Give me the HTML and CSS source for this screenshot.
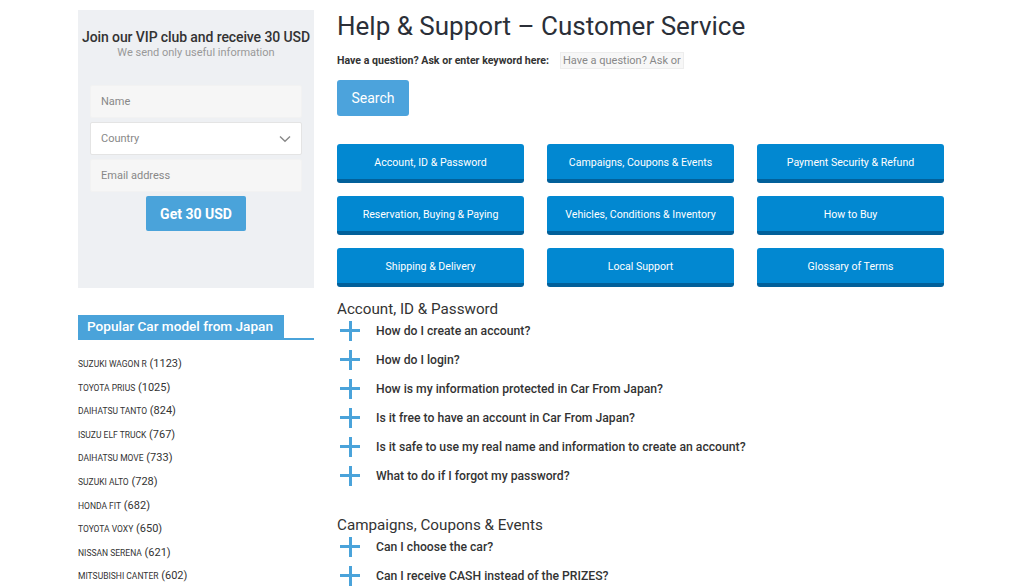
FILE: index.html
```html
<!DOCTYPE html>
<html lang="en">
<head>
    <meta charset="UTF-8">
    <meta name="viewport" content="width=device-width, initial-scale=1.0">
    <title>Help &amp; Support – Customer Service</title>
    <link rel="stylesheet" href="styles.css">
</head>
<body>
    <div class="page">
        <aside class="sidebar">
            <div class="vip-box">
                <h3>Join our VIP club and receive 30 USD</h3>
                <p class="vip-sub">We send only useful information</p>
                <form class="vip-form">
                    <input type="text" class="field field-grey" placeholder="Name">
                    <div class="field field-select">
                        <span>Country</span>
                        <svg width="12" height="8" viewBox="0 0 12 8"><path d="M1 1.5 6 6.2 11 1.5" fill="none" stroke="#888" stroke-width="1.4"/></svg>
                    </div>
                    <input type="text" class="field field-grey" placeholder="Email address">
                    <button type="button" class="btn-get">Get 30 USD</button>
                </form>
            </div>

            <div class="popular">
                <div class="popular-title"><span>Popular Car model from Japan</span></div>
                <ul class="model-list">
                    <li><span class="model">SUZUKI WAGON R</span> (1123)</li>
                    <li><span class="model">TOYOTA PRIUS</span> (1025)</li>
                    <li><span class="model">DAIHATSU TANTO</span> (824)</li>
                    <li><span class="model">ISUZU ELF TRUCK</span> (767)</li>
                    <li><span class="model">DAIHATSU MOVE</span> (733)</li>
                    <li><span class="model">SUZUKI ALTO</span> (728)</li>
                    <li><span class="model">HONDA FIT</span> (682)</li>
                    <li><span class="model">TOYOTA VOXY</span> (650)</li>
                    <li><span class="model">NISSAN SERENA</span> (621)</li>
                    <li><span class="model">MITSUBISHI CANTER</span> (602)</li>
                </ul>
            </div>
        </aside>

        <main class="content">
            <h1>Help &amp; Support – Customer Service</h1>
            <div class="ask-row">
                <label>Have a question? Ask or enter keyword here:</label>
                <input type="text" class="ask-input" placeholder="Have a question? Ask or enter keyword">
            </div>
            <button type="button" class="btn-search">Search</button>

            <div class="cat-grid">
                <a class="cat">Account, ID &amp; Password</a>
                <a class="cat">Campaigns, Coupons &amp; Events</a>
                <a class="cat">Payment Security &amp; Refund</a>
                <a class="cat">Reservation, Buying &amp; Paying</a>
                <a class="cat">Vehicles, Conditions &amp; Inventory</a>
                <a class="cat">How to Buy</a>
                <a class="cat">Shipping &amp; Delivery</a>
                <a class="cat">Local Support</a>
                <a class="cat">Glossary of Terms</a>
            </div>

            <section class="faq">
                <h2>Account, ID &amp; Password</h2>
                <div class="faq-item"><i class="plus"></i>How do I create an account?</div>
                <div class="faq-item"><i class="plus"></i>How do I login?</div>
                <div class="faq-item"><i class="plus"></i>How is my information protected in Car From Japan?</div>
                <div class="faq-item"><i class="plus"></i>Is it free to have an account in Car From Japan?</div>
                <div class="faq-item"><i class="plus"></i>Is it safe to use my real name and information to create an account?</div>
                <div class="faq-item"><i class="plus"></i>What to do if I forgot my password?</div>
            </section>

            <section class="faq">
                <h2>Campaigns, Coupons &amp; Events</h2>
                <div class="faq-item"><i class="plus"></i>Can I choose the car?</div>
                <div class="faq-item"><i class="plus"></i>Can I receive CASH instead of the PRIZES?</div>
            </section>
        </main>
    </div>
</body>
</html>
```

FILE: styles.css
```css
body {
    font-family: Roboto, "Liberation Sans", sans-serif;
    background-color: #fff;
    color: #333;
    margin: 0;
    padding: 0;
    overflow: hidden;
}
.page {
    width: 868px;
    margin: 0 auto;
    padding-top: 10px;
    display: flex;
    gap: 23px;
}
.sidebar {
    width: 236px;
    flex-shrink: 0;
}
.vip-box {
    background-color: #eef0f3;
    height: 278px;
    box-sizing: border-box;
    padding-top: 19px;
    text-align: center;
}
.vip-box h3 {
    margin: 0;
    font-size: 14px;
    font-weight: 500;
    color: #333;
    line-height: 17px;
    white-space: nowrap;
    letter-spacing: -0.1px;
}
.vip-sub {
    margin: 0;
    font-size: 11px;
    color: #999;
    line-height: 14px;
}
.vip-form {
    margin-top: 25px;
    display: flex;
    flex-direction: column;
    align-items: center;
    gap: 4px;
}
.field {
    width: 212px;
    height: 33px;
    flex-shrink: 0;
    box-sizing: border-box;
    border: 1px solid #eee;
    border-radius: 2px;
    padding: 0 10px;
    font-family: inherit;
    font-size: 11px;
    outline: none;
}
.field::placeholder {
    color: #888;
}
.field-grey {
    background-color: #f6f6f6;
    border-color: #f2f2f2;
}
.field-select {
    background: #fff;
    border-color: #e4e4e4;
    display: flex;
    align-items: center;
    justify-content: space-between;
    color: #888;
    text-align: left;
}
.btn-get {
    width: 100px;
    height: 35px;
    border: none;
    border-radius: 2px;
    background-color: #4aa3da;
    color: #fff;
    font-family: inherit;
    font-size: 14px;
    font-weight: 700;
}
.popular {
    margin-top: 27px;
}
.popular-title {
    border-bottom: 2px solid #4aa3da;
    height: 23px;
}
.popular-title span {
    display: inline-block;
    width: 206px;
    height: 23px;
    line-height: 23px;
    box-sizing: border-box;
    padding-left: 9px;
    background-color: #4aa3da;
    color: #fff;
    font-size: 13.6px;
    font-weight: 500;
}
.model-list {
    list-style: none;
    margin: 12px 0 0;
    padding: 0;
}
.model-list li {
    height: 23.6px;
    line-height: 23.6px;
    font-size: 11px;
    color: #333;
}
.model {
    font-size: 8.5px;
    color: #333;
}
.content {
    flex: 1;
}
h1 {
    margin: 1px 0 0;
    font-size: 26px;
    font-weight: 400;
    color: #2b2f38;
    line-height: 30px;
}
.ask-row {
    display: flex;
    align-items: center;
    gap: 11px;
    margin-top: 11px;
}
.ask-row label {
    font-size: 10.6px;
    font-weight: 700;
    color: #333;
}
.ask-input {
    width: 124px;
    height: 17px;
    box-sizing: border-box;
    border: 1px solid #ededed;
    background: #f7f7f7;
    padding: 0 2px;
    font-family: inherit;
    font-size: 11px;
    outline: none;
}
.ask-input::placeholder {
    color: #888;
}
.btn-search {
    margin-top: 11px;
    width: 72px;
    height: 36px;
    border: none;
    border-radius: 3px;
    background-color: #4ca3dc;
    color: #fff;
    font-family: inherit;
    font-size: 14px;
}
.cat-grid {
    margin-top: 28px;
    display: grid;
    grid-template-columns: repeat(3, 187px);
    column-gap: 23px;
    row-gap: 13px;
}
.cat {
    height: 39px;
    box-sizing: border-box;
    display: flex;
    align-items: center;
    justify-content: center;
    background-color: #0288d1;
    border-bottom: 4px solid #02609a;
    border-radius: 3px;
    color: #fff;
    font-size: 10.6px;
    padding-top: 2px;
}
.faq {
    margin-top: 15px;
}
.faq + .faq {
    margin-top: 28px;
}
.faq h2 {
    margin: 0;
    font-size: 15.2px;
    font-weight: 400;
    color: #333;
    line-height: 14px;
}
.faq-item {
    height: 29px;
    display: flex;
    align-items: center;
    font-size: 12.2px;
    font-weight: 500;
    color: #333;
}
.plus {
    position: relative;
    width: 20px;
    height: 20px;
    margin: 0 16px 0 3px;
    flex-shrink: 0;
}
.plus::before, .plus::after {
    content: "";
    position: absolute;
    background-color: #4aa3da;
}
.plus::before {
    left: 0;
    top: 8.5px;
    width: 20px;
    height: 3px;
}
.plus::after {
    top: 0;
    left: 8.5px;
    width: 3px;
    height: 20px;
}
```
